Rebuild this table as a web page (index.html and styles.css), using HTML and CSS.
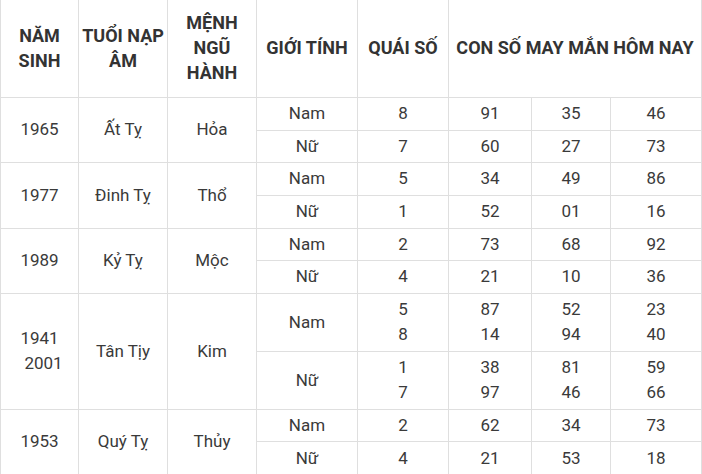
FILE: index.html
```html
<!DOCTYPE html>
<html lang="vi">
<head>
<meta charset="utf-8">
<title>Con số may mắn tuổi Tỵ</title>
<link rel="stylesheet" href="styles.css">
</head>
<body>
<table class="lucky">
  <colgroup>
    <col class="c-year"><col class="c-age"><col class="c-elem"><col class="c-sex"><col class="c-qs"><col class="c-n1"><col class="c-n2"><col class="c-n3">
  </colgroup>
  <thead>
    <tr>
      <th>NĂM SINH</th>
      <th>TUỔI NẠP ÂM</th>
      <th>MỆNH NGŨ HÀNH</th>
      <th>GIỚI TÍNH</th>
      <th>QUÁI SỐ</th>
      <th colspan="3">CON SỐ MAY MẮN HÔM NAY</th>
    </tr>
  </thead>
  <tbody>
    <tr>
      <td rowspan="2">1965</td><td rowspan="2">Ất Tỵ</td><td rowspan="2">Hỏa</td>
      <td>Nam</td><td>8</td><td>91</td><td>35</td><td>46</td>
    </tr>
    <tr><td>Nữ</td><td>7</td><td>60</td><td>27</td><td>73</td></tr>
    <tr>
      <td rowspan="2">1977</td><td rowspan="2">Đinh Tỵ</td><td rowspan="2">Thổ</td>
      <td>Nam</td><td>5</td><td>34</td><td>49</td><td>86</td>
    </tr>
    <tr><td>Nữ</td><td>1</td><td>52</td><td>01</td><td>16</td></tr>
    <tr>
      <td rowspan="2">1989</td><td rowspan="2">Kỷ Tỵ</td><td rowspan="2">Mộc</td>
      <td>Nam</td><td>2</td><td>73</td><td>68</td><td>92</td>
    </tr>
    <tr><td>Nữ</td><td>4</td><td>21</td><td>10</td><td>36</td></tr>
    <tr>
      <td rowspan="2">1941<br><span class="shift">2001</span></td><td rowspan="2">Tân Tịy</td><td rowspan="2">Kim</td>
      <td>Nam</td><td>5<br>8</td><td>87<br>14</td><td>52<br>94</td><td>23<br>40</td>
    </tr>
    <tr><td>Nữ</td><td>1<br>7</td><td>38<br>97</td><td>81<br>46</td><td>59<br>66</td></tr>
    <tr>
      <td rowspan="2">1953</td><td rowspan="2">Quý Tỵ</td><td rowspan="2">Thủy</td>
      <td>Nam</td><td>2</td><td>62</td><td>34</td><td>73</td>
    </tr>
    <tr><td>Nữ</td><td>4</td><td>21</td><td>53</td><td>18</td></tr>
  </tbody>
</table>
</body>
</html>
```

FILE: styles.css
```css
html, body {
  margin: 0;
  padding: 0;
  background: #ffffff;
}

body {
  font-family: Roboto, "Liberation Sans", Arial, sans-serif;
  color: #333333;
}

.lucky {
  border-collapse: collapse;
  table-layout: fixed;
  width: 701px;
  margin-top: -1px;
}

.c-year { width: 78px; }
.c-age { width: 89px; }
.c-elem { width: 89px; }
.c-sex { width: 101px; }
.c-qs { width: 91px; }
.c-n1 { width: 83px; }
.c-n2 { width: 79px; }
.c-n3 { width: 91px; }

.lucky th,
.lucky td {
  border: 1px solid #dfdfdf;
  text-align: center;
  vertical-align: middle;
}

.lucky th {
  font-size: 18px;
  font-weight: 700;
  line-height: 25px;
  padding: 10px 3px 12px;
  color: #333333;
}

.lucky td {
  font-size: 17px;
  font-weight: 400;
  line-height: 25.33px;
  padding: 3.17px 3px;
  color: #3a3a3a;
}

.shift {
  padding-left: 8px;
}
```
